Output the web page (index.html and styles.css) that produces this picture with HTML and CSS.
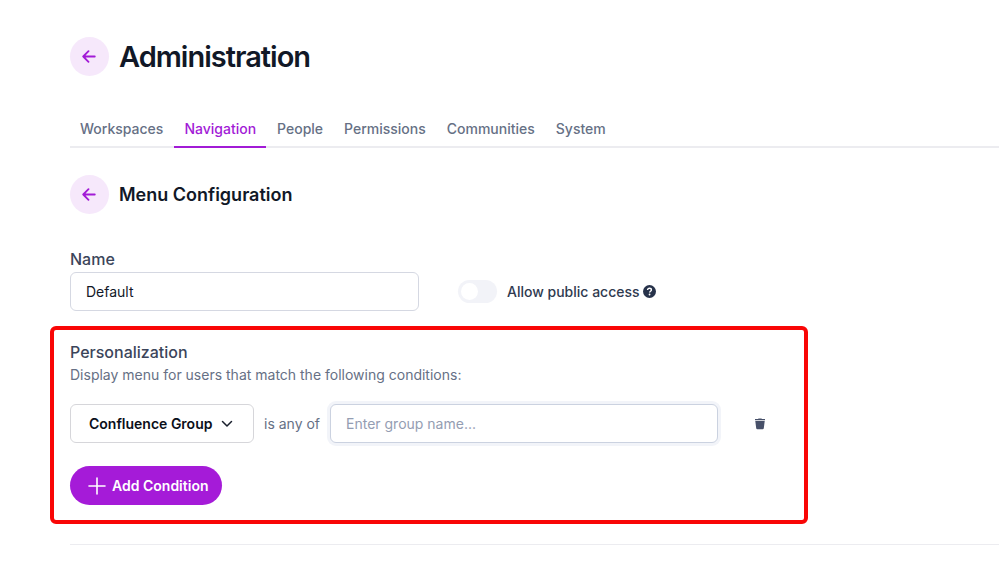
FILE: index.html
```html
<!DOCTYPE html>
<html lang="en">
<head>
<meta charset="utf-8">
<meta name="viewport" content="width=device-width, initial-scale=1">
<title>Administration</title>
<link rel="stylesheet" href="styles.css">
</head>
<body>
<main class="page">
  <header class="heading">
    <button class="back" type="button" aria-label="Back">
      <svg width="15" height="13" viewBox="0 0 15 13"><path d="M6.500 1.200 1.200 6.500l5.300 5.300M1.200 6.500h11.600"/></svg>
    </button>
    <h1 class="title">Administration</h1>
  </header>

  <nav class="tabs">
    <a class="tab" href="#">Workspaces</a>
    <a class="tab tab-active" href="#" aria-current="page">Navigation</a>
    <a class="tab" href="#">People</a>
    <a class="tab" href="#">Permissions</a>
    <a class="tab" href="#">Communities</a>
    <a class="tab" href="#">System</a>
  </nav>

  <div class="heading subheading">
    <button class="back" type="button" aria-label="Back to menus">
      <svg width="15" height="13" viewBox="0 0 15 13"><path d="M6.500 1.200 1.200 6.500l5.300 5.300M1.200 6.500h11.600"/></svg>
    </button>
    <h2 class="subtitle">Menu Configuration</h2>
  </div>

  <form class="form">
    <label class="label" for="name">Name</label>
    <div class="name-row">
      <input class="input name" id="name" type="text" value="Default">
      <div class="access">
        <input class="toggle" id="public" type="checkbox" role="switch">
        <label class="access-label" for="public">Allow public access</label>
        <svg class="help" width="13" height="13" viewBox="0 0 13 13">
          <circle cx="6.500" cy="6.500" r="6.500" fill="#27324a"/>
          <path d="M4.600 5C4.600 3.800 5.400 3.200 6.500 3.200s1.900.7 1.900 1.700c0 1.300-1.800 1.300-1.800 2.600" fill="none" stroke="#fff" stroke-width="1.400"/>
          <circle cx="6.550" cy="9.500" r=".9" fill="#fff"/>
        </svg>
      </div>
    </div>

    <section class="conditions">
      <h3 class="label">Personalization</h3>
      <p class="hint">Display menu for users that match the following conditions:</p>
      <div class="condition">
        <div class="picker">
          <select class="select" aria-label="Condition type">
            <option>Confluence Group</option>
          </select>
          <svg class="chevron" width="12" height="8" viewBox="0 0 12 8"><path d="m1.500 1.500 4.500 4.500 4.500-4.500"/></svg>
        </div>
        <label class="operator" for="group">is any of</label>
        <input class="input group" id="group" type="text" placeholder="Enter group name...">
        <button class="remove" type="button" aria-label="Remove condition">
          <svg width="12" height="12" viewBox="0 0 12 12"><path fill="#475069" d="M1 1h3l.6-.6h2.800L8 1h3v1.300H1zM1.300 3h9.400l-.9 7.300a1.200 1.200 0 0 1-1.200 1H3.400a1.200 1.200 0 0 1-1.200-1z"/></svg>
        </button>
      </div>
      <button class="add" type="button">
        <svg width="18" height="18" viewBox="0 0 18 18"><path d="M9 1v16M1 9h16"/></svg>
        Add Condition
      </button>
    </section>
  </form>
  <hr class="divider">
</main>
</body>
</html>
```
FILE: styles.css
```css
* {
  box-sizing: border-box;
}

body {
  margin: 0;
  background: #fff;
  color: #111827;
  font: 14px/22px Inter, sans-serif;
}

h1,
h2,
h3,
p {
  margin: 0;
}

button,
input,
select {
  font: inherit;
}

.page {
  padding: 37px 0 24px 70px;
}

.heading {
  display: flex;
  align-items: center;
  gap: 10px;
}

.back {
  display: grid;
  place-items: center;
  width: 39px;
  height: 39px;
  padding: 0;
  border: 0;
  border-radius: 50%;
  background: #f6e8fb;
}

.back svg {
  fill: none;
  stroke: #a21bd6;
  stroke-width: 1.8;
  stroke-linecap: round;
  stroke-linejoin: round;
}

.title {
  font-size: 29px;
  line-height: 39px;
  font-weight: 600;
  letter-spacing: -1px;
}

.tabs {
  display: flex;
  gap: 1px;
  margin-top: 35px;
  box-shadow: inset 0 -2px #ececf0;
}

.tab {
  padding: 7px 10px 6px;
  border-bottom: 2px solid transparent;
  color: #667085;
  font-weight: 500;
  text-decoration: none;
}

.tab-active {
  border-color: #a21bd6;
  color: #a21bd6;
}

.subheading {
  margin-top: 27px;
}

.subtitle {
  font-size: 18px;
  line-height: 24px;
  font-weight: 600;
}

.form {
  margin-top: 33px;
}

.label {
  display: block;
  color: #3b455a;
  font-size: 16px;
  line-height: 24px;
  font-weight: 500;
}

.name-row {
  display: flex;
  align-items: center;
  gap: 39px;
  margin-top: 1px;
}

.input {
  min-width: 0;
  height: 39px;
  padding: 0 15px;
  border: 1px solid #d5d8e2;
  border-radius: 6px;
  background: #fff;
  color: #111827;
  outline: 0;
}

.name {
  flex: 0 1 349px;
}

.access {
  display: flex;
  align-items: center;
  color: #2f3a4f;
  font-weight: 500;
}

.toggle {
  appearance: none;
  display: flex;
  align-items: center;
  width: 39px;
  height: 23px;
  margin: 0 10px 0 0;
  padding: 0 3px;
  border-radius: 12px;
  background: #f2f3f8;
}

.toggle::before {
  content: "";
  width: 17px;
  height: 17px;
  border-radius: 50%;
  background: #fff;
}

.toggle:checked {
  justify-content: flex-end;
  background: #a21bd6;
}

.help {
  margin-left: 3px;
}

.conditions {
  max-width: 758px;
  margin: 15px 0 0 -20px;
  padding: 10px 16px 15px;
  border: 4px solid #f90606;
  border-radius: 6px;
}

.hint,
.operator {
  color: #667085;
}

.condition {
  display: flex;
  align-items: center;
  margin-top: 18px;
}

.picker {
  position: relative;
}

.select {
  appearance: none;
  display: block;
  width: 184px;
  height: 39px;
  padding: 0 36px 0 18px;
  border: 1px solid #d6d6da;
  border-radius: 6px;
  background: #fff;
  color: #0b0f1a;
  font-weight: 600;
}

.chevron {
  position: absolute;
  top: 16px;
  right: 21px;
  fill: none;
  stroke: #1a202e;
  stroke-width: 1.5;
  stroke-linecap: round;
  stroke-linejoin: round;
  pointer-events: none;
}

.operator {
  margin: 0 10px;
}

.group {
  flex: 0 1 388px;
  border-color: #cbd2e0;
  box-shadow: 0 0 0 3px #f2f4f9;
}

.group::placeholder {
  color: #949db2;
  opacity: 1;
}

.remove {
  display: grid;
  place-items: center;
  width: 24px;
  height: 24px;
  margin-left: 30px;
  padding: 0;
  border: 0;
  background: none;
}

.add {
  display: flex;
  align-items: center;
  gap: 6px;
  height: 39px;
  margin-top: 23px;
  padding: 0 14px 0 18px;
  border: 0;
  border-radius: 20px;
  background: #a51bd8;
  color: #fff;
  font-weight: 600;
}

.add svg {
  fill: none;
  stroke: #fff;
  stroke-width: 1.6;
  stroke-linecap: round;
}

.divider {
  margin: 20px 0 0;
  border: 0;
  border-top: 1px solid #ececf0;
}
```
